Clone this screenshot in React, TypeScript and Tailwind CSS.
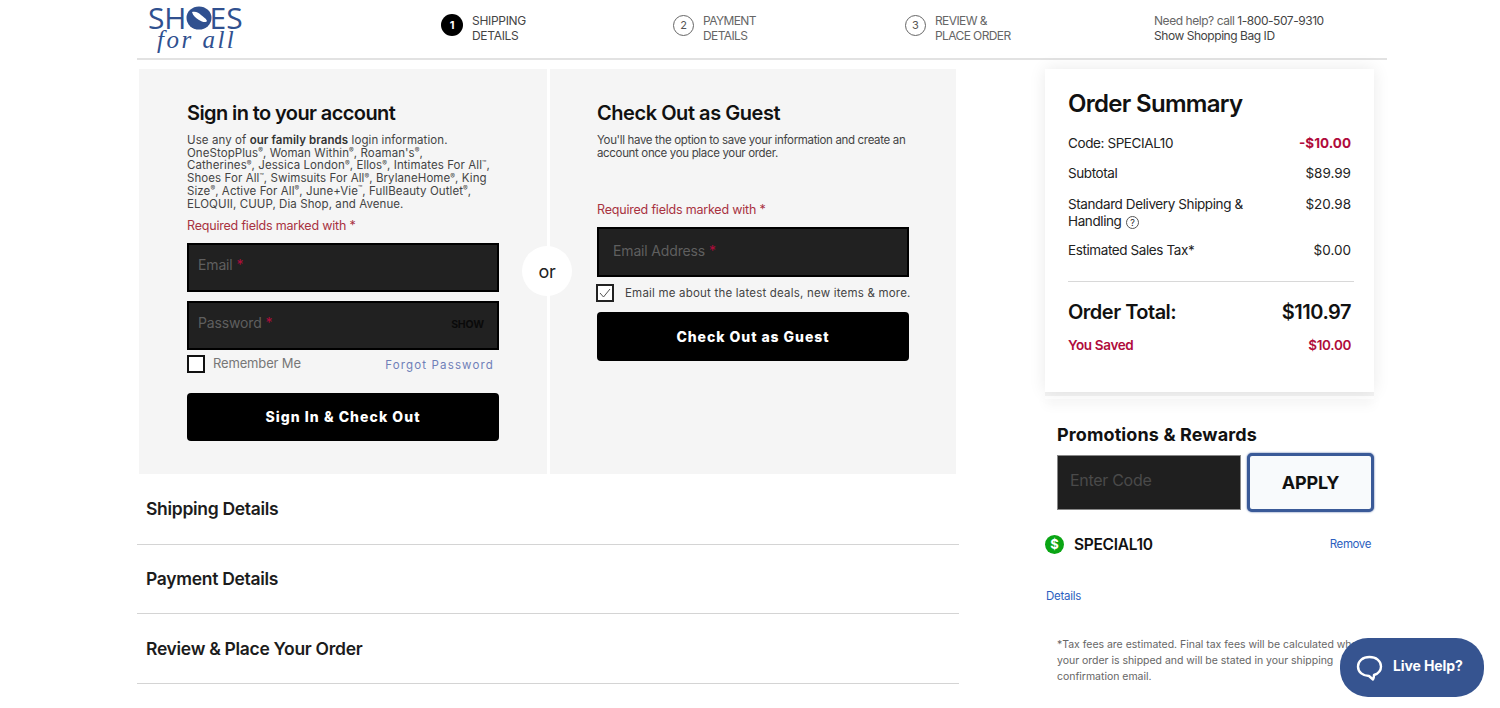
import React from 'react';

const R = () => <sup className="text-[7px]">®</sup>;
const TM = () => <sup className="text-[7px]">™</sup>;

const Step: React.FC<{ n: number; a: string; b: string; active?: boolean; w: string }> = ({ n, a, b, active, w }) => (
  <div className={`flex items-center ${w}`}>
    {active ? (
      <div className="w-[22px] h-[22px] rounded-full bg-black text-white text-[11px] font-bold flex items-center justify-center">{n}</div>
    ) : (
      <div className="w-[21px] h-[21px] rounded-full border border-[#666] text-[#555] text-[11px] flex items-center justify-center">{n}</div>
    )}
    <div className={`${active ? 'text-[#444] tracking-[-0.3px]' : 'text-[#666] tracking-[-0.6px]'} ml-[9px] mt-[5px] text-[12px] leading-[15px]`}>
      {a}<br />{b}
    </div>
  </div>
);

const Field: React.FC<{ label: string; right?: boolean; h: string; cls?: string }> = ({ label, right, h, cls = 'pt-[11px] pl-[9px]' }) => (
  <div className={`flex justify-between w-[312px] ${h} ${cls} pr-[11px] bg-[#212121] border-2 border-black text-[14px] leading-[18px] tracking-[-0.15px] text-[#5f5f5f]`}>
    <span>{label} <span className="text-[#b00c3c]">*</span></span>
    {right && <span className="text-[10.5px] font-bold text-[#0a0a0a] pt-[2px] pr-[2px]">SHOW</span>}
  </div>
);

const Row: React.FC<{ label: React.ReactNode; value: string; cls: string; valueCls?: string }> = ({ label, value, cls, valueCls = 'text-[#222]' }) => (
  <div className={`flex justify-between pr-[23px] text-[13.5px] leading-[17px] text-[#222] ${cls}`}>
    <div className="tracking-[-0.4px]">{label}</div>
    <div className={valueCls}>{value}</div>
  </div>
);

const Accordion: React.FC<{ title: string; h: string; cls?: string }> = ({ title, h, cls = '' }) => (
  <div className={`flex items-center pl-[9px] ${h} ${cls} border-b border-[#d4d4d4] text-[17.5px] font-semibold tracking-[-0.3px] text-[#1c1c1c]`}>{title}</div>
);

export default function App() {
  return (
    <div className="w-[1500px] h-[708px] overflow-hidden bg-white relative" style={{ fontFamily: 'Inter, "Liberation Sans", sans-serif' }}>
      <div className="w-[1250px] ml-[137px]">
        {/* header */}
        <div className="flex items-center h-[60px] border-b-2 border-[#e2e2e2] pb-[8px]">
          <div className="w-[304px] pl-[11px]">
            <div className="relative w-[96px] h-[50px] pt-[3px] text-[#30508f]">
              <div className="text-[30px] leading-[30px] tracking-[-0.1px]" style={{ fontFamily: '"Open Sans", sans-serif' }}>SHOES</div>
              <div className="pl-[9px] -mt-[3px] text-[25px] leading-[20px] italic tracking-[2.5px]" style={{ fontFamily: '"Liberation Serif", serif' }}>for all</div>
              <svg className="absolute left-[38px] top-[6px]" width="26" height="24" viewBox="0 0 26 24">
                <ellipse cx="13" cy="12" rx="12.500" ry="11.500" fill="#30508f" />
                <path d="M6 6c4-1 7 1 9 3 2 2 5 3 6 6-1 2-5 1-8-1C10 12 7 10 6 6z" fill="#fff" />
              </svg>
            </div>
          </div>
          <Step n={1} a="SHIPPING" b="DETAILS" active w="w-[232px]" />
          <Step n={2} a="PAYMENT" b="DETAILS" w="w-[232px]" />
          <Step n={3} a="REVIEW &" b="PLACE ORDER" w="w-[249px]" />
          <div className="mt-[5px] text-[12px] leading-[15px] tracking-[-0.45px] text-[#666]">
            Need help? call <span className="text-[#444]">1-800-507-9310</span><br />
            <span className="text-[#444]">Show Shopping Bag ID</span>
          </div>
        </div>

        <div className="flex">
          {/* left column */}
          <div className="w-[822px]">
            <div className="relative flex gap-[3px] pl-[2px] mt-[9px]">
              <div className="w-[408px] h-[405px] bg-[#f5f5f5] pl-[48px] pt-[32px]">
                <h2 className="text-[20px] leading-[24px] font-semibold tracking-[-0.6px] text-[#111]">Sign in to your account</h2>
                <p className="mt-[9px] text-[11.5px] leading-[12.7px] tracking-[0.08px] text-[#444]">
                  Use any of <b className="font-semibold text-[#333]">our family brands</b> login information.<br />
                  OneStopPlus<R />, Woman Within<R />, Roaman's<R />,<br />
                  Catherines<R />, Jessica London<R />, Ellos<R />, Intimates For All<TM />,<br />
                  Shoes For All<TM />, Swimsuits For All<R />, BrylaneHome<R />, King<br />
                  Size<R />, Active For All<R />, June+Vie<TM />, FullBeauty Outlet<R />,<br />
                  ELOQUII, CUUP, Dia Shop, and Avenue.
                </p>
                <p className="mt-[8px] text-[12.5px] leading-[16px] tracking-[-0.2px] text-[#a8323f]">Required fields marked with *</p>
                <div className="mt-[9px]"><Field label="Email" h="h-[49px]" /></div>
                <div className="mt-[9px]"><Field label="Password" right h="h-[49px]" /></div>
                <div className="flex items-center w-[312px] mt-[4px]">
                  <div className="w-[18px] h-[18px] bg-white border-2 border-[#111]" />
                  <span className="ml-[8px] -mt-[2px] text-[13px] tracking-[-0.15px] text-[#777]">Remember Me</span>
                  <a className="ml-auto mr-[5px] mt-[3px] text-[11.5px] tracking-[1.15px] text-[#6f7fb8]">Forgot Password</a>
                </div>
                <button className="block w-[312px] h-[48px] mt-[19px] pb-[2px] bg-black rounded-[4px] text-white text-[14px] font-extrabold tracking-[1.05px]">Sign In &amp; Check Out</button>
              </div>
              <div className="w-[406px] h-[405px] bg-[#f5f5f5] pl-[47px] pt-[32px]">
                <h2 className="text-[20px] leading-[24px] font-semibold tracking-[-0.45px] text-[#111]">Check Out as Guest</h2>
                <p className="mt-[9px] text-[11.5px] leading-[12.7px] tracking-[-0.34px] text-[#444]">
                  You'll have the option to save your information and create an<br />
                  account once you place your order.
                </p>
                <p className="mt-[43px] text-[12.5px] leading-[16px] tracking-[-0.2px] text-[#a8323f]">Required fields marked with *</p>
                <div className="mt-[9px]"><Field label="Email Address" h="h-[50px]" cls="pt-[13px] pl-[14px]" /></div>
                <div className="flex items-center mt-[7px] -ml-[1px]">
                  <div className="w-[18px] h-[18px] bg-white border-2 border-[#222] flex items-center justify-center">
                    <svg width="12" height="10" viewBox="0 0 12 10" fill="none" stroke="#555" strokeWidth="1"><path d="M1 5l3.5 4L11 1" /></svg>
                  </div>
                  <span className="ml-[11px] text-[11.5px] tracking-[0.2px] text-[#444]">Email me about the latest deals, new items &amp; more.</span>
                </div>
                <button className="block w-[312px] h-[49px] mt-[10px] pb-[1px] bg-black rounded-[4px] text-white text-[14px] font-extrabold tracking-[0.95px]">Check Out as Guest</button>
              </div>
              <div className="absolute left-[385px] top-[177px] w-[50px] h-[50px] rounded-full bg-white flex items-center justify-center text-[18px] text-[#222] tracking-[-0.3px]">or</div>
            </div>
            <Accordion title="Shipping Details" h="h-[71px]" />
            <Accordion title="Payment Details" h="h-[69px]" />
            <Accordion title="Review & Place Your Order" h="h-[70px]" cls="pt-[2px]" />
          </div>

          {/* right column */}
          <div className="w-[329px] ml-[86px]">
            <div className="mt-[9px] h-[323px] bg-white pl-[23px] pt-[20px] shadow-[0_0_16px_rgba(0,0,0,0.09)] relative z-10">
              <h2 className="text-[24px] leading-[30px] font-semibold tracking-[-0.7px] text-[#111]">Order Summary</h2>
              <Row cls="mt-[16px]" label="Code: SPECIAL10" value="-$10.00" valueCls="font-bold text-[#b00c3c]" />
              <Row cls="mt-[13px]" label="Subtotal" value="$89.99" />
              <Row cls="mt-[14px]" label={<>Standard Delivery Shipping &amp;<br />Handling <span className="inline-flex items-center justify-center w-[13px] h-[13px] rounded-full border border-[#555] text-[9px] leading-none align-[0px] ml-[1px]">?</span></>} value="$20.98" />
              <Row cls="mt-[12px]" label="Estimated Sales Tax*" value="$0.00" />
              <div className="h-px mt-[22px] mr-[20px] bg-[#d8d8d8]" />
              <div className="flex justify-between pr-[23px] mt-[17px] text-[20px] leading-[26px] font-semibold tracking-[-0.5px] text-[#111]">
                <span>Order Total:</span><span>$110.97</span>
              </div>
              <div className="flex justify-between pr-[23px] mt-[12px] text-[13.5px] leading-[17px] font-semibold tracking-[-0.35px] text-[#b00c3c]">
                <span>You Saved</span><span>$10.00</span>
              </div>
            </div>
            <div className="h-[7px] border-t-[4px] border-[#f3f3f3] bg-white shadow-[0_6px_12px_rgba(0,0,0,0.05)]" />

            <h3 className="mt-[25px] ml-[12px] text-[18px] leading-[22px] font-bold tracking-[0.12px] text-[#111]">Promotions &amp; Rewards</h3>
            <div className="flex items-center mt-[7px] ml-[12px]">
              <div className="w-[184px] h-[55px] bg-[#1f1f1f] border border-[#888] pl-[12px] pt-[14px] text-[16px] leading-[20px] tracking-[-0.3px] text-[#4a4a4a]">Enter Code</div>
              <button className="w-[127px] h-[59px] ml-[6px] rounded-[5px] border-[3px] border-[#3a5a98] shadow-[0_0_2px_#3a5a98] bg-[#f8fafc] text-[18px] font-bold tracking-[-0.2px] text-[#111]">APPLY</button>
            </div>
            <div className="flex items-center mt-[22px]">
              <div className="w-[19px] h-[19px] rounded-full bg-[#0aa514] text-white text-[13px] font-bold flex items-center justify-center">$</div>
              <span className="ml-[10px] mt-[1px] text-[15.5px] leading-[20px] font-semibold tracking-[-0.3px] text-[#111]">SPECIAL10</span>
              <a className="ml-auto mr-[3px] mt-[1px] text-[11.5px] tracking-[-0.4px] text-[#2d5fc0]">Remove</a>
            </div>
            <a className="block mt-[33px] ml-[1px] text-[11.5px] leading-[16px] tracking-[-0.25px] text-[#2d5fc0]">Details</a>
            <p className="mt-[33px] ml-[12px] whitespace-nowrap text-[10.5px] leading-[16px] tracking-[-0.02px] text-[#666]">
              *Tax fees are estimated. Final tax fees will be calculated when<br />
              your order is shipped and will be stated in your shipping<br />
              confirmation email.
            </p>
          </div>
        </div>
      </div>

      {/* live chat bubble */}
      <div className="absolute left-[1340px] top-[638px] w-[144px] h-[59px] rounded-[28px] bg-[#365490] flex items-center pl-[16px] text-white">
        <svg width="27" height="28" viewBox="0 0 27 28" fill="none" stroke="#fff" strokeWidth="2.4">
          <path d="M13.5 3C7 3 2 6.8 2 12.5S7 22 13 22l4 3.500c.8-1.500 1-3 1-4.500 4.500-1.500 7-4.500 7-8.500C25 6.800 20 3 13.500 3z" strokeLinejoin="round" />
        </svg>
        <span className="ml-[10px] mb-[4px] text-[14px] font-bold tracking-[-0.1px]">Live Help?</span>
      </div>
    </div>
  );
}
